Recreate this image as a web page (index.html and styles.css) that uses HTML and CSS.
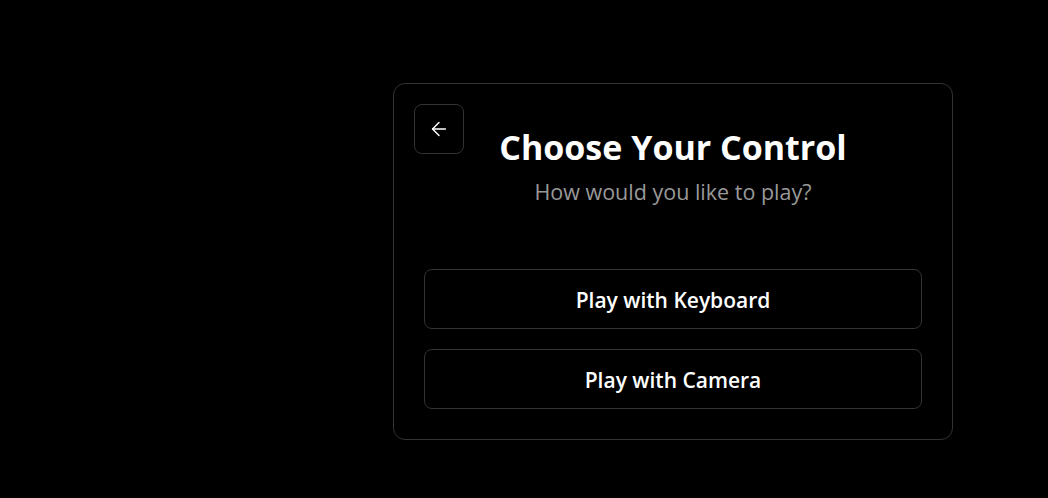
FILE: index.html
```html
<!DOCTYPE html>
<html lang="en">
<head>
<meta charset="utf-8">
<title>Choose Your Control</title>
<link rel="stylesheet" href="styles.css">
</head>
<body>
<main class="page">
  <section class="card">
    <button class="back" aria-label="Back">
      <svg width="22" height="22" viewBox="0 0 24 24" fill="none" stroke="currentColor" stroke-width="1.6" stroke-linecap="round" stroke-linejoin="round"><path d="M19 12H5"/><path d="M12 19l-7-7 7-7"/></svg>
    </button>
    <header class="head">
      <h1 class="title">Choose Your Control</h1>
      <p class="subtitle">How would you like to play?</p>
    </header>
    <div class="options">
      <button class="option">Play with Keyboard</button>
      <button class="option">Play with Camera</button>
    </div>
  </section>
</main>
</body>
</html>
```
FILE: styles.css
```css
html, body {
  margin: 0;
  padding: 0;
  background: #000;
  height: 100%;
}
body {
  font-family: "Open Sans", "Noto Sans", sans-serif;
  color: #fff;
}
.page {
  padding: 83px 0 0 393px;
}
.card {
  position: relative;
  box-sizing: border-box;
  width: 560px;
  height: 357px;
  border: 1px solid #333;
  border-radius: 12px;
  padding: 30px;
  background: #000;
}
.back {
  position: absolute;
  top: 20px;
  left: 20px;
  width: 50px;
  height: 50px;
  box-sizing: border-box;
  border: 1px solid #333;
  border-radius: 8px;
  background: #000;
  color: #fff;
  display: flex;
  align-items: center;
  justify-content: center;
  padding: 0;
}
.head {
  text-align: center;
  margin-bottom: 63px;
}
.title {
  margin: 11px 0 0;
  font-size: 34px;
  line-height: 44px;
  font-weight: 700;
}
.subtitle {
  margin: 9px 0 0;
  font-size: 21.5px;
  line-height: 28px;
  color: #999;
}
.options {
  display: flex;
  flex-direction: column;
  gap: 20px;
}
.option {
  height: 60px;
  box-sizing: border-box;
  border: 1px solid #333;
  border-radius: 8px;
  background: #000;
  color: #fff;
  font-family: inherit;
  font-size: 21px;
  font-weight: 600;
  padding: 2px 0 0;
}
```
